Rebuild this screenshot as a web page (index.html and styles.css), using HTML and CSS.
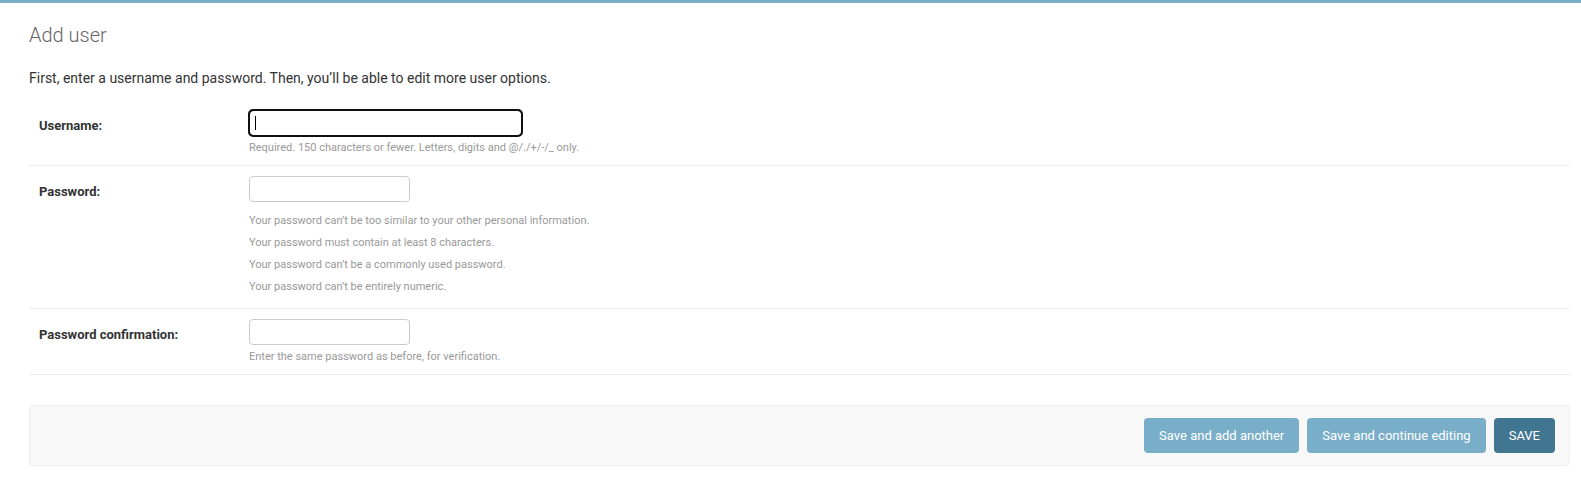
FILE: index.html
```html
<!DOCTYPE html>
<html lang="en">
<head>
<meta charset="utf-8">
<title>Add user</title>
<link rel="stylesheet" href="styles.css">
</head>
<body>
<div class="topbar"></div>
<main class="content">
  <h1 class="title">Add user</h1>
  <p class="intro">First, enter a username and password. Then, you’ll be able to edit more user options.</p>
  <form class="user-form">
    <fieldset class="module">
      <div class="form-row">
        <label class="field-label" for="id_username">Username:</label>
        <div class="field">
          <span class="input-wrap">
            <input class="text-input wide-input is-focused" type="text" id="id_username">
            <span class="caret"></span>
          </span>
          <div class="help">Required. 150 characters or fewer. Letters, digits and @/./+/-/_ only.</div>
        </div>
      </div>
      <div class="form-row">
        <label class="field-label" for="id_password1">Password:</label>
        <div class="field">
          <input class="text-input short-input" type="password" id="id_password1">
          <div class="help">
            <ul class="help-list">
              <li>Your password can’t be too similar to your other personal information.</li>
              <li>Your password must contain at least 8 characters.</li>
              <li>Your password can’t be a commonly used password.</li>
              <li>Your password can’t be entirely numeric.</li>
            </ul>
          </div>
        </div>
      </div>
      <div class="form-row">
        <label class="field-label" for="id_password2">Password confirmation:</label>
        <div class="field">
          <input class="text-input short-input" type="password" id="id_password2">
          <div class="help">Enter the same password as before, for verification.</div>
        </div>
      </div>
    </fieldset>
    <div class="submit-row">
      <button type="button" class="btn">Save and add another</button>
      <button type="button" class="btn">Save and continue editing</button>
      <button type="button" class="btn btn-default">Save</button>
    </div>
  </form>
</main>
</body>
</html>
```

FILE: styles.css
```css
* { box-sizing: border-box; }

html, body {
  margin: 0;
  padding: 0;
  background: #fff;
}

body {
  font-family: Roboto, "Liberation Sans", sans-serif;
  font-size: 14px;
  color: #333;
}

.topbar {
  height: 3px;
  background: #79aec8;
}

.content {
  padding: 20px 11px 0 29px;
}

.title {
  margin: 0 0 21px;
  font-size: 20px;
  line-height: 24px;
  font-weight: 300;
  color: #666;
}

.intro {
  margin: 0 0 12px;
  font-size: 14px;
  line-height: 20px;
  color: #333;
}

.user-form {
  margin: 0;
}

.module {
  margin: 0 0 30px;
  padding: 0;
  border: none;
}

.form-row {
  display: flex;
  padding: 10px;
  border-bottom: 1px solid #eee;
  font-size: 13px;
}

.field-label {
  flex: 0 0 210px;
  padding-top: 8px;
  font-size: 13px;
  line-height: 16px;
  font-weight: bold;
  color: #333;
}

.field {
  display: flex;
  flex-direction: column;
  align-items: flex-start;
}

.input-wrap {
  position: relative;
  display: block;
}

.text-input {
  display: block;
  height: 26px;
  margin: 0;
  padding: 5px 6px;
  border: 1px solid #ccc;
  border-radius: 4px;
  background: #fff;
  font-family: Roboto, "Liberation Sans", sans-serif;
  font-size: 13px;
  color: #333;
}

.wide-input { width: 273px; }
.short-input { width: 161px; }

.is-focused {
  border-color: #101010;
  outline: 2px solid #101010;
  outline-offset: -1px;
}

.caret {
  position: absolute;
  left: 6px;
  top: 6px;
  width: 1px;
  height: 14px;
  background: #000;
}

.help {
  margin-top: 4px;
  font-size: 11px;
  line-height: 15px;
  color: #999;
}

.help-list {
  margin: 0;
  padding: 4px 0 0;
  list-style: none;
}

.help-list li {
  padding: 3px 0;
  line-height: 16px;
}

.submit-row {
  display: flex;
  justify-content: flex-end;
  gap: 8px;
  padding: 12px 14px;
  background: #f8f8f8;
  border: 1px solid #eee;
  border-radius: 4px;
}

.btn {
  height: 35px;
  padding: 10px 15px;
  border: none;
  border-radius: 4px;
  background: #79aec8;
  color: #fff;
  font-family: Roboto, "Liberation Sans", sans-serif;
  font-size: 13px;
  line-height: 15px;
  cursor: pointer;
}

.btn-default {
  background: #417690;
  text-transform: uppercase;
}
```
